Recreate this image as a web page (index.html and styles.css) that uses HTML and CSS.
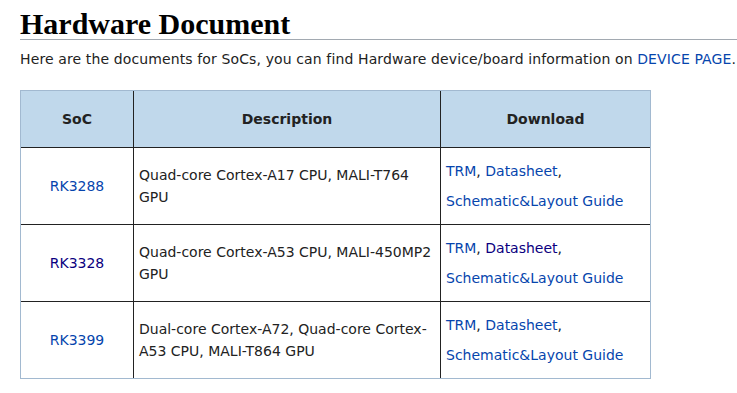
FILE: index.html
```html
<!DOCTYPE html>
<html lang="en">
<head>
    <meta charset="UTF-8">
    <meta name="viewport" content="width=device-width, initial-scale=1.0">
    <title>Hardware Document</title>
    <link rel="stylesheet" href="styles.css">
</head>
<body>
    <div class="content">
        <h1>Hardware Document</h1>
        <p class="intro">Here are the documents for SoCs, you can find Hardware device/board information on <a href="#">DEVICE PAGE</a>.</p>

        <!-- SoC documents -->
        <table class="doc-table">
            <thead>
                <tr>
                    <th class="col-soc">SoC</th>
                    <th class="col-desc">Description</th>
                    <th class="col-dl">Download</th>
                </tr>
            </thead>
            <tbody>
                <tr>
                    <td class="soc"><a href="#">RK3288</a></td>
                    <td class="desc">Quad-core Cortex-A17 CPU, MALI-T764 GPU</td>
                    <td class="dl"><a href="#">TRM</a>, <a href="#">Datasheet</a>,<br><a href="#">Schematic&amp;Layout Guide</a></td>
                </tr>
                <tr>
                    <td class="soc"><a href="#" class="visited">RK3328</a></td>
                    <td class="desc">Quad-core Cortex-A53 CPU, MALI-450MP2 GPU</td>
                    <td class="dl"><a href="#">TRM</a>, <a href="#" class="visited">Datasheet</a>,<br><a href="#">Schematic&amp;Layout Guide</a></td>
                </tr>
                <tr>
                    <td class="soc"><a href="#">RK3399</a></td>
                    <td class="desc">Dual-core Cortex-A72, Quad-core Cortex-A53 CPU, MALI-T864 GPU</td>
                    <td class="dl"><a href="#">TRM</a>, <a href="#">Datasheet</a>,<br><a href="#">Schematic&amp;Layout Guide</a></td>
                </tr>
            </tbody>
        </table>
    </div>
</body>
</html>
```

FILE: styles.css
```css
/* Wiki-like page */

body {
    margin: 0;
    padding: 0;
    background-color: #fff;
    color: #222;
    font-family: 'DejaVu Sans', sans-serif;
    font-size: 14px;
}

.content {
    padding: 0 0 0 20px;
}

a {
    color: #0645ad;
    text-decoration: none;
}

a.visited {
    color: #0b0080;
}

h1 {
    font-family: 'Liberation Serif', serif;
    font-size: 30px;
    font-weight: bold;
    line-height: 30px;
    color: #000;
    margin: 9px 0 0 0;
    border-bottom: 1px solid #a2a9b1;
}

.intro {
    margin: 8px 0 20px 0;
    line-height: 22px;
    letter-spacing: 0.12px;
    white-space: nowrap;
}

.doc-table {
    border-collapse: separate;
    border-spacing: 0;
    border: 1px solid #a2b9d0;
    table-layout: fixed;
    width: 631px;
}

.doc-table th,
.doc-table td {
    box-sizing: border-box;
    border-right: 1px solid #222;
    border-bottom: 1px solid #222;
    padding: 8px 5px;
    line-height: 22px;
    vertical-align: middle;
    text-align: left;
}

.doc-table th:last-child,
.doc-table td:last-child {
    border-right: none;
}

.doc-table tbody tr:last-child td {
    border-bottom: none;
}

.doc-table th {
    background-color: #c0d8eb;
    font-weight: bold;
    text-align: center;
    padding: 17px 5px;
}

.col-soc {
    width: 113px;
}

.col-desc {
    width: 307px;
}

.col-dl {
    width: 209px;
}

.doc-table td.soc {
    text-align: center;
}

.doc-table td.dl {
    line-height: 30px;
}
```
